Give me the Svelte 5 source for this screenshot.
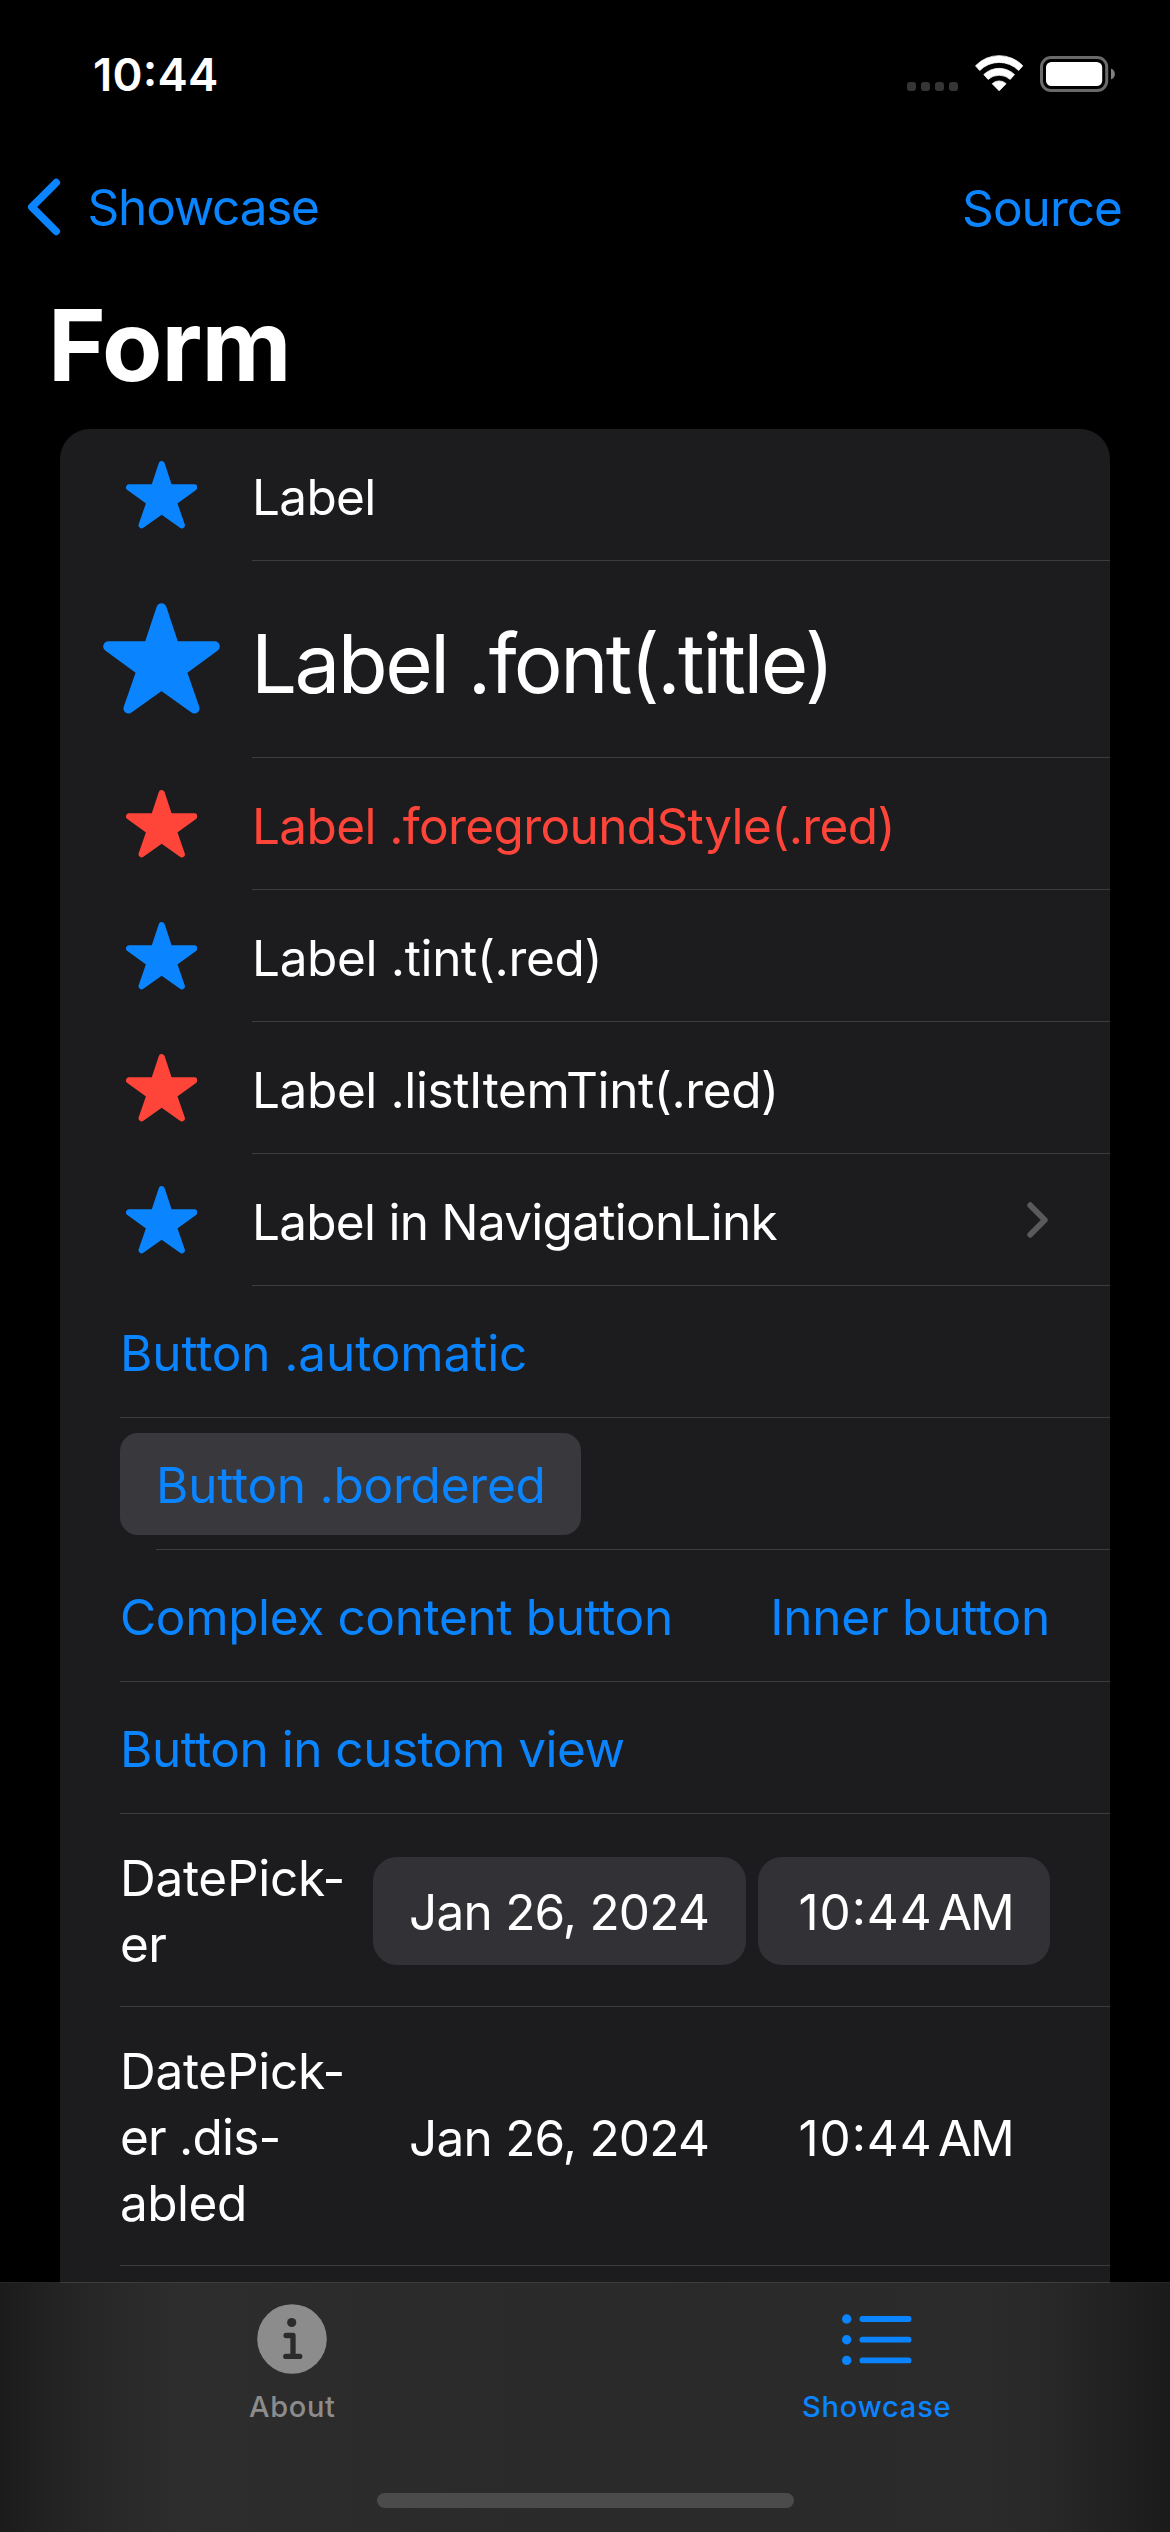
<script>
  // tracking: letter spacing in px for each string
  const labels = [
    { text: 'Label', tracking: -0.7, tint: 'blue' },
    { text: 'Label .font(.title)', tracking: -2.58, tint: 'blue', title: true },
    { text: 'Label .foregroundStyle(.red)', tracking: -0.62, tint: 'red', red: true },
    { text: 'Label .tint(.red)', tracking: -0.35, tint: 'blue' },
    { text: 'Label .listItemTint(.red)', tracking: -0.4, tint: 'red' },
    { text: 'Label in NavigationLink', tracking: -0.74, tint: 'blue', link: true },
  ];

  const pickers = [
    {
      lines: [
        { text: 'DatePick-', tracking: -0.29 },
        { text: 'er', tracking: -0.6 },
      ],
      disabled: false,
    },
    {
      lines: [
        { text: 'DatePick-', tracking: -0.29 },
        { text: 'er .dis-', tracking: -0.8 },
        { text: 'abled', tracking: -0.49 },
      ],
      disabled: true,
    },
  ];
</script>

<div class="screen">
  <header class="status">
    <span class="clock">10:44</span>
    <div class="indicators">
      <div class="dots"><i></i><i></i><i></i><i></i></div>
      <svg class="wifi" viewBox="0 0 48.3 36.5">
        <path d="M.5 10.8A32.6 32.6 0 0 1 47.8 10.8L43.6 15.5A27.4 27.4 0 0 0 4.7 15.5Z" />
        <path d="M8.8 19.6A22 22 0 0 1 39.5 19.6L35.2 24.4A16.6 16.6 0 0 0 13.1 24.4Z" />
        <path d="M17.2 28.7A10 10 0 0 1 31.1 28.7L24.15 35.8Z" />
      </svg>
      <svg class="battery" viewBox="0 0 75 36">
        <rect x="1.5" y="1.5" width="65.2" height="33" rx="9.5" fill="none" stroke="#6a6a6a" stroke-width="3" />
        <rect x="6" y="6" width="56.2" height="24" rx="5.5" fill="#fff" />
        <path d="M71 12.6C76.2 14.4 76.2 21.6 71 23.4Z" fill="#808080" />
      </svg>
    </div>
  </header>

  <nav class="nav">
    <a class="back" href="#showcase">
      <svg viewBox="0 0 34 58"><path d="M29.2 4.6 4.8 29 29.2 53.4" /></svg>
      <span>Showcase</span>
    </a>
    <a class="source" href="#source">Source</a>
  </nav>

  <h1>Form</h1>

  <main>
    <div class="card">
      {#each labels as item}
        <div class="row label" class:title={item.title} class:red={item.red}>
          <div class="icon">
            <svg class="star {item.tint}" viewBox="0 0 71.4 67.6">
              <path d="M35.7 3.2 43.4 26.4H68.2L47.8 41.3 55.8 64.3 35.7 49.9 15.6 64.3 23.6 41.3 3.2 26.4H28Z" />
            </svg>
          </div>
          <div class="body ruled">
            <span style:letter-spacing="{item.tracking}px">{item.text}</span>
            {#if item.link}
              <svg class="chevron" viewBox="0 0 21 36"><path d="M3.2 3.2 17.8 18 3.2 32.8" /></svg>
            {/if}
          </div>
        </div>
      {/each}

      <div class="row ruled action automatic">Button .automatic</div>
      <div class="row action">
        <button class="bordered">Button .bordered</button>
        <hr />
      </div>
      <div class="row ruled action">
        <span class="complex">Complex content button</span>
        <span class="inner">Inner button</span>
      </div>
      <div class="row ruled action custom">Button in custom view</div>

      {#each pickers as picker}
        <div class="row ruled picker" class:disabled={picker.disabled}>
          <div class="lines">
            {#each picker.lines as line}
              <div style:letter-spacing="{line.tracking}px">{line.text}</div>
            {/each}
          </div>
          <div class="pill date">Jan 26, 2024</div>
          <div class="pill time"><span class="hour">10:44</span><span class="ampm">AM</span></div>
        </div>
      {/each}
    </div>
  </main>

  <footer>
    <div class="tabs">
      <div class="tab">
        <svg viewBox="0 0 70 70">
          <circle cx="35" cy="35" r="34.8" fill="#8c8c8c" />
          <circle cx="34.7" cy="18.5" r="4.6" fill="#2b2b2b" />
          <path d="M29.1 31.5H36V52.4M28.8 52.4H42.7" fill="none" stroke="#2b2b2b" stroke-width="5.3" stroke-linecap="round" stroke-linejoin="round" />
        </svg>
        <span class="about">About</span>
      </div>
      <div class="tab active">
        <svg viewBox="0 0 70 70">
          <g fill="#0a84ff">
            <circle cx="4.7" cy="15" r="4.7" />
            <circle cx="4.7" cy="35.7" r="4.7" />
            <circle cx="4.7" cy="56.4" r="4.7" />
          </g>
          <path d="M20.4 15H66.6M20.4 35.7H66.6M20.4 56.4H66.6" fill="none" stroke="#0a84ff" stroke-width="5.8" stroke-linecap="round" />
        </svg>
        <span>Showcase</span>
      </div>
    </div>
    <div class="home"></div>
  </footer>
</div>

<style>
  :global(body) {
    margin: 0;
    background: #000;
  }

  .screen {
    width: 1170px;
    height: 2532px;
    display: flex;
    flex-direction: column;
    overflow: hidden;
    background: #000;
    color: #fff;
    font-family: Inter, 'Liberation Sans', sans-serif;
    font-size: 49.5px;
    line-height: 66px;
    white-space: nowrap;
  }

  .status {
    flex: none;
    box-sizing: border-box;
    height: 132px;
    padding: 17px 55px 0 93px;
    display: flex;
    align-items: center;
    justify-content: space-between;
  }
  .clock {
    font-size: 45.5px;
    font-weight: 600;
    letter-spacing: 0.23px;
    font-feature-settings: 'calt' 1;
  }
  .indicators {
    display: flex;
    align-items: center;
    gap: 17px;
  }
  .dots {
    display: flex;
    gap: 5px;
    padding-top: 24px;
  }
  .dots i {
    width: 9px;
    height: 9px;
    border-radius: 3px;
    background: #353535;
  }
  .wifi {
    width: 48.3px;
    height: 36.5px;
    margin-bottom: 2px;
    fill: #fff;
    stroke: #fff;
    stroke-width: 0.8;
    stroke-linejoin: round;
  }
  .battery {
    width: 75px;
    height: 36px;
    margin-bottom: 1px;
  }

  .nav {
    flex: none;
    height: 150px;
    padding: 0 48px 0 27px;
    display: flex;
    align-items: center;
    justify-content: space-between;
  }
  .nav a {
    color: #0a84ff;
    text-decoration: none;
  }
  .back {
    display: flex;
    align-items: center;
    gap: 26.6px;
    letter-spacing: -1.23px;
  }
  .back svg {
    width: 34px;
    height: 58px;
    fill: none;
    stroke: #0a84ff;
    stroke-width: 7.6;
    stroke-linecap: round;
    stroke-linejoin: round;
  }
  .source {
    padding-top: 2px;
    letter-spacing: -0.96px;
  }

  h1 {
    flex: none;
    margin: 0 0 21px;
    padding-left: 48px;
    font-size: 98.6px;
    font-weight: 700;
    line-height: 126px;
    letter-spacing: -0.95px;
  }

  main {
    flex: 1;
    min-height: 0;
    overflow: hidden;
    padding: 0 60px;
  }
  .card {
    height: 2000px;
    border-radius: 30px;
    background: #1c1c1e;
  }

  .row {
    box-sizing: border-box;
    height: 132px;
    margin-left: 60px;
    display: flex;
    align-items: center;
  }
  .ruled {
    box-sizing: border-box;
    border-bottom: 1px solid #3d3d40;
  }
  .label {
    margin-left: 0;
    align-items: stretch;
  }
  .icon {
    flex: none;
    box-sizing: border-box;
    width: 192px;
    padding: 32px 0 0 11px;
    display: flex;
    align-items: flex-start;
    justify-content: center;
  }
  .star {
    width: 71.4px;
    height: 67.6px;
    stroke-width: 6.2;
    stroke-linejoin: round;
  }
  .blue {
    fill: #0a84ff;
    stroke: #0a84ff;
  }
  .star.red {
    fill: #ff453a;
    stroke: #ff453a;
  }
  .body {
    flex: 1;
    padding: 5px 62px 0 0;
    display: flex;
    align-items: center;
    justify-content: space-between;
  }
  .row.red {
    color: #ff453a;
  }
  .title {
    height: 197px;
    font-size: 81.6px;
    line-height: 100px;
  }
  .title .icon {
    padding-top: 42px;
  }
  .title .star {
    width: 117px;
    height: 111px;
  }
  .title .body {
    padding-top: 9px;
  }
  .title span {
    margin-left: -1px;
  }
  .chevron {
    width: 21px;
    height: 36px;
    margin-bottom: 4px;
    fill: none;
    stroke: #5a5a5c;
    stroke-width: 5.8;
    stroke-linecap: round;
    stroke-linejoin: round;
  }

  .action {
    padding: 3px 60px 0 0;
    justify-content: space-between;
    color: #0a84ff;
  }
  .automatic {
    letter-spacing: -0.14px;
  }
  .complex {
    letter-spacing: -0.35px;
  }
  .inner {
    letter-spacing: -0.22px;
  }
  .custom {
    letter-spacing: -0.5px;
  }
  .row:has(.bordered) {
    flex-direction: column;
    align-items: flex-start;
    padding: 15px 0 0;
  }
  .bordered {
    box-sizing: border-box;
    width: 461px;
    height: 102px;
    padding: 2px 0 0 36px;
    border: 0;
    border-radius: 18px;
    background: #39383d;
    color: inherit;
    font: inherit;
    letter-spacing: -0.24px;
    text-align: left;
  }
  hr {
    width: calc(100% - 36px);
    height: 1px;
    margin: 0 0 0 36px;
    border: 0;
    background: #3d3d40;
  }

  .picker {
    height: 193px;
    padding: 2px 60px 0 0;
  }
  .lines {
    width: 253px;
  }
  .pill {
    box-sizing: border-box;
    height: 108px;
    padding-top: 1px;
    display: flex;
    align-items: center;
    border-radius: 24px;
    background: #323136;
  }
  .date {
    width: 373px;
    padding-left: 36px;
    letter-spacing: -0.77px;
  }
  .time {
    width: 292px;
    margin-left: 12px;
    padding-left: 40.6px;
  }
  .hour {
    letter-spacing: 0.87px;
    font-feature-settings: 'calt' 1;
  }
  .ampm {
    margin-left: 5.4px;
    letter-spacing: -2.15px;
  }
  .disabled {
    height: 259px;
  }
  .disabled .pill {
    background: none;
  }

  footer {
    flex: none;
    box-sizing: border-box;
    height: 250px;
    padding-bottom: 24px;
    display: flex;
    flex-direction: column;
    align-items: center;
    justify-content: space-between;
    background:
      linear-gradient(90deg, #262626 60px, #3d3d3f 60px, #3d3d3f 1110px, #262626 1110px) top / 100% 1px no-repeat,
      linear-gradient(90deg, #1b1b1b 0, #222322 55px, #292929 120px, #2d2d2d 180px, #2b2b2b 420px, #2a2a2a 700px, #2b2b2b 990px, #262726 1060px, #1f201f 1125px, #1a1b1a 1170px);
  }
  .tabs {
    align-self: stretch;
    display: flex;
  }
  .tab {
    flex: 1;
    padding-top: 22px;
    display: flex;
    flex-direction: column;
    align-items: center;
    gap: 15px;
    color: #8c8c8c;
    font-size: 29px;
    font-weight: 500;
    line-height: 36px;
    letter-spacing: 0.8px;
  }
  .tab.active {
    padding-right: 1px;
    color: #0a84ff;
  }
  .tab svg {
    width: 70px;
    height: 70px;
  }
  .about {
    letter-spacing: 0.64px;
  }
  .home {
    width: 417px;
    height: 15px;
    border-radius: 8px;
    background: #4b4b4b;
  }
</style>
